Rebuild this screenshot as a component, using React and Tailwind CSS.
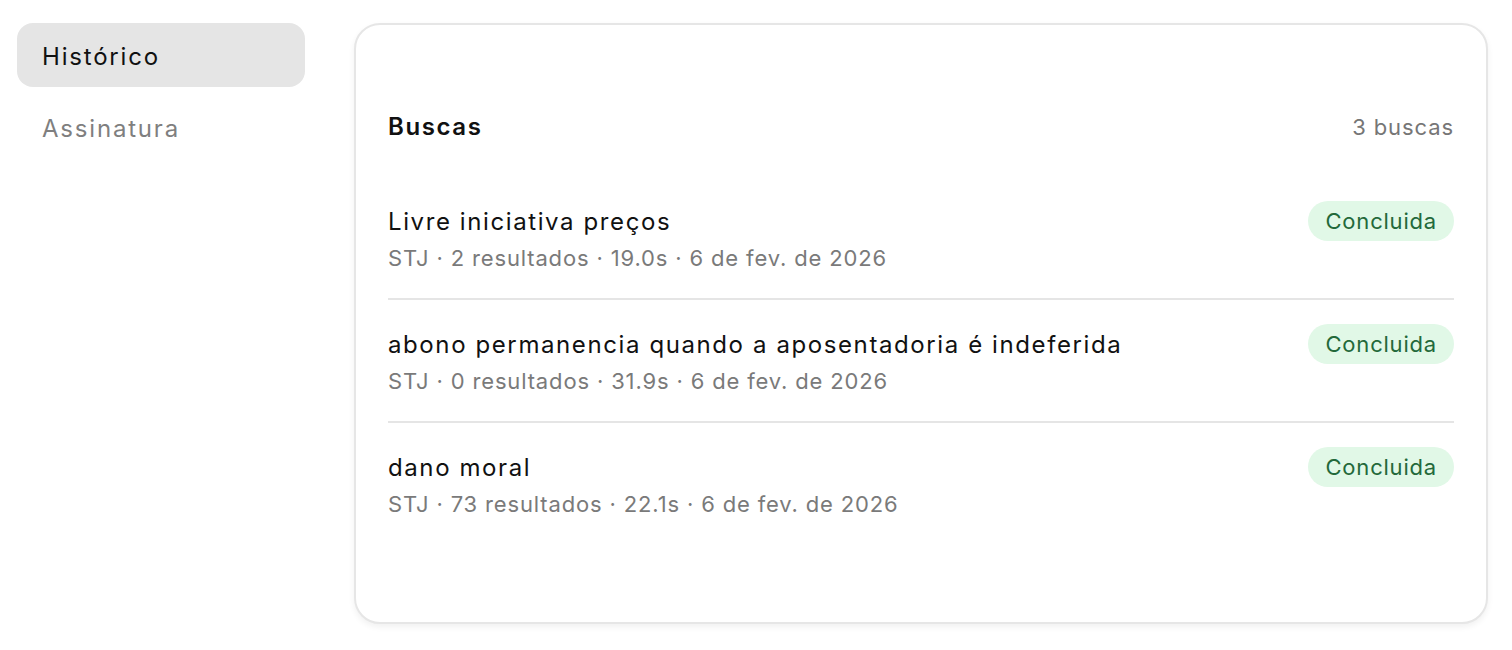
import React from "react";

const rows = [
  { title: "Livre iniciativa preços", meta: "STJ · 2 resultados · 19.0s · 6 de fev. de 2026" },
  { title: "abono permanencia quando a aposentadoria é indeferida", meta: "STJ · 0 resultados · 31.9s · 6 de fev. de 2026" },
  { title: "dano moral", meta: "STJ · 73 resultados · 22.1s · 6 de fev. de 2026" },
];

export default function App() {
  return (
    <div
      className="min-h-[650px] bg-white flex items-start pl-[17px] pt-[23px] pr-[24px]"
      style={{ fontFamily: "Inter, 'Noto Sans', sans-serif" }}
    >
      <nav className="w-[288px] shrink-0 flex flex-col gap-[9px]">
        <div className="h-[64px] rounded-[16px] bg-[#e5e5e5] flex items-center pt-[3px] px-[25px] text-[24px] tracking-[1.8px] text-[#111]">
          Histórico
        </div>
        <div className="h-[64px] rounded-[16px] flex items-center pt-[2px] px-[25px] text-[24px] tracking-[1.8px] text-[#7f7f7f]">
          Assinatura
        </div>
      </nav>
      <main className="ml-[49px] flex-1 rounded-[26px] border-2 border-[#e6e6e6] bg-white shadow-[0_3px_6px_rgba(0,0,0,0.06)] px-[32px] pt-[86px] pb-[78px]">
        <div className="flex items-center justify-between h-[32px] mb-[34px]">
          <span className="text-[24px] font-semibold tracking-[1.6px] text-[#111]">Buscas</span>
          <span className="text-[22px] tracking-[0.9px] text-[#767676]">3 buscas</span>
        </div>
        <div>
          {rows.map((r, i) => (
            <div
              key={i}
              className={
                "flex items-start justify-between pt-[24px] pb-[26px] " +
                (i < rows.length - 1 ? "border-b-2 border-[#e5e5e5]" : "")
              }
            >
              <div className="pt-[5px]">
                <div className="text-[24px] leading-[32px] tracking-[1.6px] text-[#111]">{r.title}</div>
                <div className="mt-[6px] text-[22px] leading-[28px] tracking-[0.85px] text-[#7a7a7a]">{r.meta}</div>
              </div>
              <div className="h-[40px] px-[17px] rounded-full bg-[#e1f8e7] text-[#23693a] text-[22px] tracking-[0.8px] flex items-center">
                Concluida
              </div>
            </div>
          ))}
        </div>
      </main>
    </div>
  );
}
